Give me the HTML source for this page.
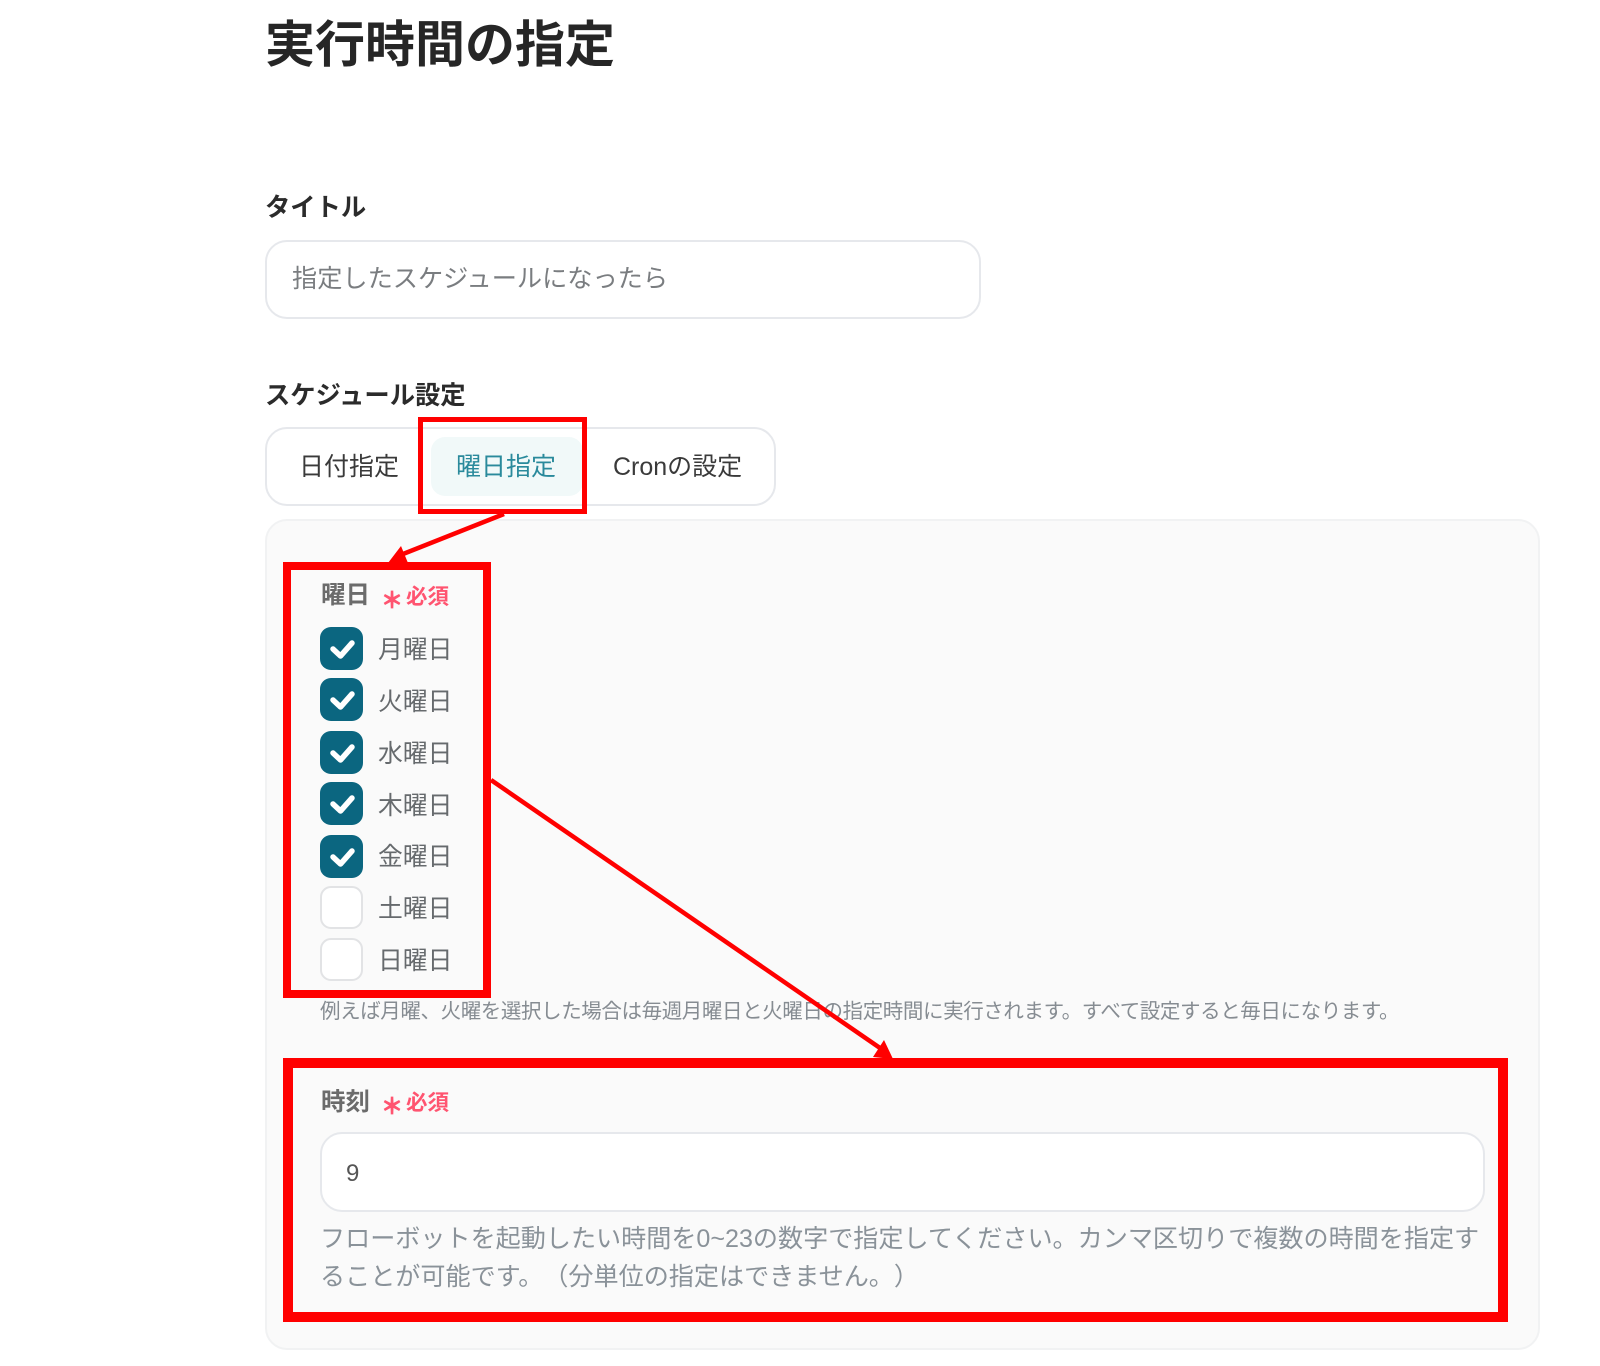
<!DOCTYPE html>
<html lang="ja">
<head>
<meta charset="utf-8">
<title>実行時間の指定</title>
<style>
html,body{margin:0;padding:0;background:#fff}
#p{position:relative;width:1600px;height:1366px;overflow:hidden;background:#fff;font-family:"Liberation Sans","Noto Sans CJK JP",sans-serif;text-spacing-trim:space-all}
#p *{box-sizing:border-box}
.t{position:absolute;white-space:nowrap;line-height:40px;height:40px;filter:blur(.35px)}
.b{position:absolute}
.lbl{font-size:25.3px;font-weight:700;color:#2b2b2b}
.sub{font-size:24.5px;font-weight:700;color:#6b6b6b}
.req{font-size:21.5px;font-weight:700;color:#ff5470}
.ast{font-size:22px;font-weight:700;color:#ff5470;font-family:"Noto Sans CJK JP",sans-serif;-webkit-text-stroke:.8px #ff5470}
.day{font-size:24.8px;color:#666a6d}
.tab{font-size:25px;color:#3a3a3a}
.cb{position:absolute;left:320px;width:43px;height:43px;border-radius:11px;background:#0b6680}
.cb svg{position:absolute;left:0;top:0}
.off{background:#fff;border:2px solid #e2e3e5}
.red{position:absolute;border-style:solid;border-color:#f00}
</style>
</head>
<body>
<div id="p">
<div class="t" style="left:265px;top:15px;height:60px;line-height:60px;font-size:50px;font-weight:700;color:#262626">実行時間の指定</div>

<div class="t lbl" style="left:265px;top:188px">タイトル</div>
<div class="b" style="left:265px;top:240px;width:716px;height:79px;border:2px solid #e6e8ec;border-radius:22px;background:#fff"></div>
<div class="t" style="left:292px;top:259px;font-size:25.2px;color:#7a7d80">指定したスケジュールになったら</div>

<div class="t lbl" style="left:265px;top:376px">スケジュール設定</div>
<div class="b" style="left:265px;top:427px;width:511px;height:79px;border:2px solid #e6e8ec;border-radius:22px;background:#fff"></div>
<div class="b" style="left:431px;top:437px;width:152px;height:59px;border-radius:14px;background:#f1f9f9"></div>
<div class="t tab" style="left:299px;top:447px">日付指定</div>
<div class="t tab" style="left:456px;top:447px;color:#2a8a9c">曜日指定</div>
<div class="t tab" style="left:613px;top:447px">Cronの設定</div>

<div class="b" style="left:265px;top:519px;width:1275px;height:831px;border:2px solid #f1f2f3;border-radius:22px;background:#fafafa"></div>

<div class="t sub" style="left:321px;top:576px">曜日</div>
<div class="t ast" style="left:381px;top:579px">＊</div>
<div class="t req" style="left:406px;top:577px">必須</div>

<div class="cb" style="top:627px"><svg width="43" height="43"><path d="M13 22l7.5 7L32 16" fill="none" stroke="#fff" stroke-width="5.5" stroke-linecap="round" stroke-linejoin="round"/></svg></div>
<div class="cb" style="top:678px"><svg width="43" height="43"><path d="M13 22l7.5 7L32 16" fill="none" stroke="#fff" stroke-width="5.5" stroke-linecap="round" stroke-linejoin="round"/></svg></div>
<div class="cb" style="top:731px"><svg width="43" height="43"><path d="M13 22l7.5 7L32 16" fill="none" stroke="#fff" stroke-width="5.5" stroke-linecap="round" stroke-linejoin="round"/></svg></div>
<div class="cb" style="top:782px"><svg width="43" height="43"><path d="M13 22l7.5 7L32 16" fill="none" stroke="#fff" stroke-width="5.5" stroke-linecap="round" stroke-linejoin="round"/></svg></div>
<div class="cb" style="top:835px"><svg width="43" height="43"><path d="M13 22l7.5 7L32 16" fill="none" stroke="#fff" stroke-width="5.5" stroke-linecap="round" stroke-linejoin="round"/></svg></div>
<div class="cb off" style="top:886px"></div>
<div class="cb off" style="top:938px"></div>

<div class="t day" style="left:378px;top:631px">月曜日</div>
<div class="t day" style="left:378px;top:683px">火曜日</div>
<div class="t day" style="left:378px;top:735px">水曜日</div>
<div class="t day" style="left:378px;top:787px">木曜日</div>
<div class="t day" style="left:378px;top:838px">金曜日</div>
<div class="t day" style="left:378px;top:890px">土曜日</div>
<div class="t day" style="left:378px;top:942px">日曜日</div>

<div class="t" style="left:320px;top:992px;font-size:20.5px;letter-spacing:-.4px;color:#868c92">例えば月曜、火曜を選択した場合は毎週月曜日と火曜日の指定時間に実行されます。すべて設定すると毎日になります。</div>

<div class="t sub" style="left:321px;top:1083px">時刻</div>
<div class="t ast" style="left:381px;top:1085px">＊</div>
<div class="t req" style="left:406px;top:1083px">必須</div>

<div class="b" style="left:320px;top:1132px;width:1165px;height:80px;border:2px solid #e6e8ec;border-radius:22px;background:#fff"></div>
<div class="t" style="left:346px;top:1154px;font-size:24px;color:#555">9</div>

<div class="t" style="left:320px;top:1219px;font-size:25.1px;color:#8a9299">フローボットを起動したい時間を0~23の数字で指定してください。カンマ区切りで複数の時間を指定す</div>
<div class="t" style="left:320px;top:1257px;font-size:25.1px;color:#8a9299">ることが可能です。（分単位の指定はできません。）</div>

<div class="red" style="left:418px;top:417px;width:169px;height:97px;border-width:5px"></div>
<div class="red" style="left:283px;top:562px;width:208px;height:436px;border-width:8px"></div>
<div class="red" style="left:283px;top:1058px;width:1225px;height:264px;border-width:10px"></div>

<svg class="b" style="left:0;top:0" width="1600" height="1366">
<path d="M504 514L398 556" stroke="#f00" stroke-width="4.5" fill="none"/>
<path d="M388 563L401 546L408 563Z" fill="#f00"/>
<path d="M491 780L880 1048" stroke="#f00" stroke-width="4.5" fill="none"/>
<path d="M893 1059L884 1040L873 1057Z" fill="#f00"/>
</svg>
</div>
</body>
</html>
